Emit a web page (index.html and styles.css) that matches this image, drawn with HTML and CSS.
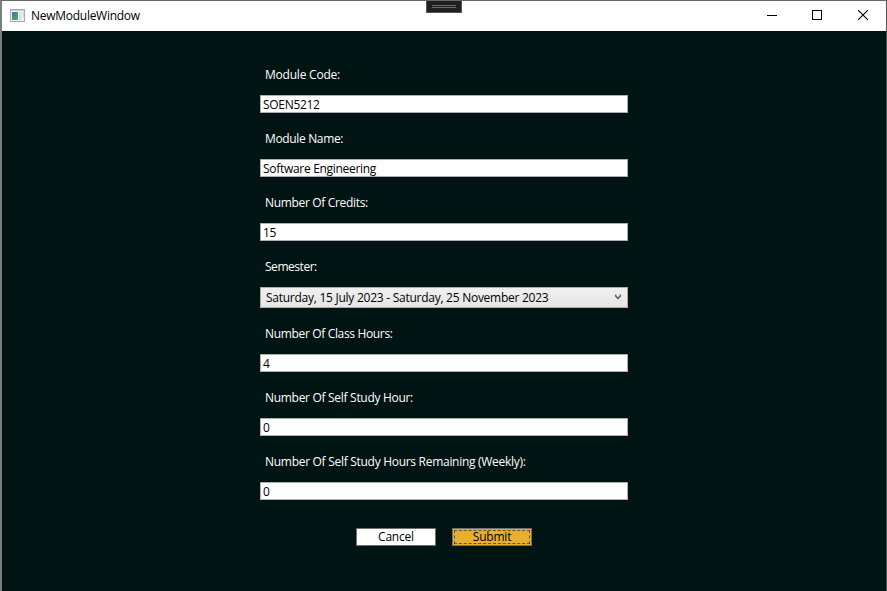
FILE: index.html
```html
<!DOCTYPE html>
<html lang="en">
<head>
<meta charset="utf-8">
<title>NewModuleWindow</title>
<link rel="stylesheet" href="styles.css">
</head>
<body>
<div class="window">
  <header class="titlebar">
    <svg class="app-icon" width="16" height="14" viewBox="0 0 16 14">
      <defs><linearGradient id="pane" x1="0" y1="0" x2="1" y2="1"><stop offset="0" stop-color="#3d72a4"/><stop offset="1" stop-color="#5cad72"/></linearGradient></defs>
      <rect x=".5" y=".5" width="14" height="12" fill="#f2f2f2" stroke="#a9adb0"/>
      <path d="M1 1.5H14" stroke="#c9cccf"/>
      <rect x="2" y="3" width="6" height="8" fill="url(#pane)"/>
      <rect x="9" y="3" width="3" height="8" fill="#dce5e6"/>
      <rect x="13" y="3" width="1" height="5" fill="#c5d3cf"/>
    </svg>
    <span class="title">NewModuleWindow</span>
    <div class="controls">
      <svg class="minimize" width="10" height="10" viewBox="0 0 10 10"><path d="M0 5.5H10" stroke="#000"/></svg>
      <svg width="10" height="10" viewBox="0 0 10 10"><rect x=".5" y=".5" width="9" height="9" fill="none" stroke="#000"/></svg>
      <svg width="10" height="10" viewBox="0 0 10 10"><path d="M0 0L10 10M10 0L0 10" stroke="#000" stroke-width="1.1"/></svg>
    </div>
  </header>
  <main class="client">
    <form class="form">
      <label class="label" for="code"><span class="l-code">Module Code:</span></label>
      <input class="input" id="code" value="SOEN5212">
      <label class="label" for="name"><span class="l-name">Module Name:</span></label>
      <input class="input" id="name" value="Software Engineering">
      <label class="label" for="credits"><span class="l-credits">Number Of Credits:</span></label>
      <input class="input" id="credits" value="15">
      <label class="label"><span class="l-sem">Semester:</span></label>
      <div class="combo">
        <span class="v-sem">Saturday, 15 July 2023 - Saturday, 25 November 2023</span>
        <svg width="6" height="6" viewBox="0 0 6 6"><path d="M.6 .6V2L3 4.4L5.4 2V.6" fill="none" stroke="#606060" stroke-width="1.5"/></svg>
      </div>
      <label class="label" for="hours"><span class="l-hours">Number Of Class Hours:</span></label>
      <input class="input" id="hours" value="4">
      <label class="label" for="self"><span class="l-self">Number Of Self Study Hour:</span></label>
      <input class="input" id="self" value="0">
      <label class="label" for="remaining"><span class="l-rem">Number Of Self Study Hours Remaining (Weekly):</span></label>
      <input class="input" id="remaining" value="0">
      <div class="actions">
        <button type="button" class="button">Cancel</button>
        <button type="button" class="button submit">Submit</button>
      </div>
    </form>
  </main>
  <div class="toolbar-handle"><i></i><i></i></div>
  <div class="behind"><i></i><i></i></div>
</div>
</body>
</html>
```
FILE: styles.css
```css
* { box-sizing: border-box; }
body { margin: 0; background: #fff; font: 12px/16px "Open Sans", "Noto Sans", sans-serif; color: #000; }
.window {
  position: relative;
  height: 591px;
  overflow: hidden;
  border: 1px solid #666;
  border-left: 2px solid #78807e;
  border-bottom: 0;
  border-right-color: #4c5854;
}
.titlebar { display: flex; align-items: center; height: 30px; padding: 0 18px 0 8px; background: #fff; }
.app-icon { margin-bottom: 1px; }
.title { margin-left: 5px; letter-spacing: -.27px; }
.controls { display: flex; gap: 36px; margin: 0 0 2px auto; }
.controls svg { display: block; }
.controls .minimize { margin-right: -1px; }
.client { height: 560px; padding-top: 18px; background: #001413; }
.form { width: 368px; margin-left: 258px; }
.label { display: block; height: 46px; padding: 18px 0 12px 5px; color: #fff; white-space: nowrap; }
.l-code { letter-spacing: -.22px; }
.l-name { letter-spacing: -.35px; }
.l-credits { letter-spacing: -.33px; }
.l-sem { letter-spacing: -.46px; }
.l-hours { letter-spacing: -.34px; }
.l-self { letter-spacing: -.3px; }
.l-rem { letter-spacing: -.29px; }
.v-sem { letter-spacing: -.26px; }
.input {
  display: block;
  width: 368px;
  height: 18px;
  margin: 0;
  padding: 1px 2px 0;
  border: 1px solid #abadb3;
  border-radius: 0;
  background: #fff;
  font: inherit;
  line-height: 15px;
  letter-spacing: -.3px;
  color: #000;
  outline: 0;
}
.combo {
  display: flex;
  align-items: center;
  justify-content: space-between;
  height: 21px;
  padding: 0 6px 0 5px;
  border: 1px solid #acacac;
  background: linear-gradient(#f0f0f0, #e5e5e5);
  white-space: nowrap;
}
.combo svg { margin-bottom: 1px; }
.actions { display: flex; justify-content: center; gap: 16px; margin-top: 28px; }
.button {
  width: 80px;
  height: 18px;
  padding: 0;
  border: 1px solid #707070;
  border-radius: 0;
  background: #fff;
  font: inherit;
  line-height: 16px;
  letter-spacing: -.2px;
  color: #000;
}
.submit { background: #e6af2e; outline: 1px dashed #6e5010; outline-offset: -3px; }
.toolbar-handle {
  position: absolute;
  top: -1px;
  left: 424px;
  display: flex;
  flex-direction: column;
  gap: 1px;
  width: 36px;
  height: 13px;
  padding: 4px 5px 0;
  border: 1px solid #555;
  border-top-color: #666;
  background: #1f1f1f;
}
.toolbar-handle i { height: 1px; background: #6b6b6b; }
.behind { position: absolute; top: -1px; left: 467px; display: flex; gap: 3px; }
.behind i { width: 3px; height: 1px; background: #285a87; }
```
